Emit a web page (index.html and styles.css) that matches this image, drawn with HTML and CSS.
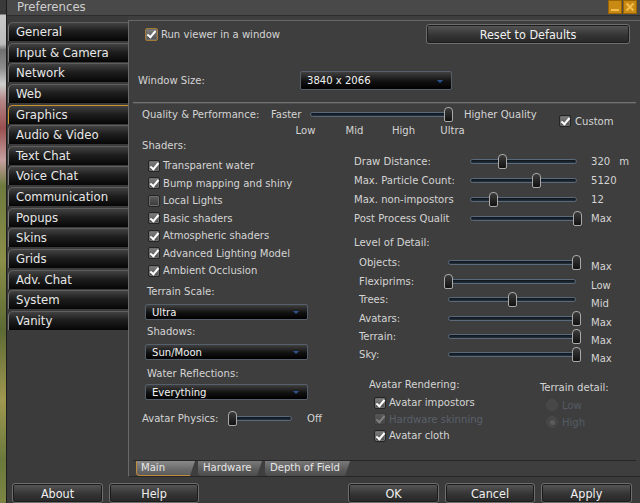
FILE: index.html
```html
<!DOCTYPE html>
<html lang="en">
<head>
  <meta charset="UTF-8">
  <title>Preferences</title>
  <link rel="stylesheet" href="styles.css">
</head>
<body>
  <div class="world"></div>

  <div class="floater">
    <!-- title bar -->
    <div class="titlebar">
      <span class="title">Preferences</span>
      <div class="title-btns">
        <span class="tbtn"><svg width="12" height="12" viewBox="0 0 12 12"><rect x="2" y="8" width="8" height="2" fill="#f4bd4d"/></svg></span>
        <span class="tbtn"><svg width="12" height="12" viewBox="0 0 12 12"><path d="M2.5 2.5 L9.5 9.5 M9.5 2.5 L2.5 9.5" stroke="#f4bd4d" stroke-width="2"/></svg></span>
      </div>
    </div>

    <div class="main">
      <!-- category tabs -->
      <div class="tabs">
        <div class="tab">General</div>
        <div class="tab">Input &amp; Camera</div>
        <div class="tab">Network</div>
        <div class="tab">Web</div>
        <div class="tab active">Graphics</div>
        <div class="tab">Audio &amp; Video</div>
        <div class="tab">Text Chat</div>
        <div class="tab">Voice Chat</div>
        <div class="tab">Communication</div>
        <div class="tab">Popups</div>
        <div class="tab">Skins</div>
        <div class="tab">Grids</div>
        <div class="tab">Adv. Chat</div>
        <div class="tab">System</div>
        <div class="tab">Vanity</div>
      </div>

      <!-- graphics panel -->
      <div class="panel">
        <div class="row-top">
          <label class="check focus"><span class="box on"></span>Run viewer in a window</label>
          <button class="btn reset">Reset to Defaults</button>
        </div>

        <div class="row-winsize">
          <span class="winsize-label">Window Size:</span>
          <div class="combo combo-wide">3840 x 2066<span class="arrow"></span></div>
        </div>

        <div class="sep"></div>

        <div class="row-quality">
          <span class="q-label">Quality &amp; Performance:</span>
          <span class="q-faster">Faster</span>
          <div class="slider s-quality" style="--v:1"><span class="track"></span><span class="knob"></span></div>
          <span class="q-higher">Higher Quality</span>
          <label class="check custom"><span class="box on"></span>Custom</label>
        </div>

        <div class="ticks">
          <span>Low</span><span>Mid</span><span>High</span><span>Ultra</span>
        </div>

        <div class="cols">
          <div class="col-left">
            <div class="sec-label">Shaders:</div>
            <div class="checklist">
              <label class="check"><span class="box on"></span>Transparent water</label>
              <label class="check"><span class="box on"></span>Bump mapping and shiny</label>
              <label class="check"><span class="box"></span>Local Lights</label>
              <label class="check"><span class="box on"></span>Basic shaders</label>
              <label class="check"><span class="box on"></span>Atmospheric shaders</label>
              <label class="check"><span class="box on"></span>Advanced Lighting Model</label>
              <label class="check"><span class="box on"></span>Ambient Occlusion</label>
            </div>

            <div class="combo-label terrain">Terrain Scale:</div>
            <div class="combo combo-left">Ultra<span class="arrow"></span></div>
            <div class="combo-label shadows">Shadows:</div>
            <div class="combo combo-left">Sun/Moon<span class="arrow"></span></div>
            <div class="combo-label water">Water Reflections:</div>
            <div class="combo combo-left water-combo">Everything<span class="arrow"></span></div>

            <div class="phys-row">
              <span class="phys-label">Avatar Physics:</span>
              <div class="slider s-phys" style="--v:0"><span class="track"></span><span class="knob"></span></div>
              <span class="phys-value">Off</span>
            </div>
          </div>

          <div class="col-right">
            <div class="sliders">
              <div class="srow">
                <span class="s-label">Draw Distance:</span>
                <div class="slider s-mid" style="--v:.3"><span class="track"></span><span class="knob"></span></div>
                <span class="s-value">320<span class="unit">m</span></span>
              </div>
              <div class="srow">
                <span class="s-label">Max. Particle Count:</span>
                <div class="slider s-mid" style="--v:.625"><span class="track"></span><span class="knob"></span></div>
                <span class="s-value">5120</span>
              </div>
              <div class="srow">
                <span class="s-label">Max. non-impostors</span>
                <div class="slider s-mid" style="--v:.215"><span class="track"></span><span class="knob"></span></div>
                <span class="s-value">12</span>
              </div>
              <div class="srow">
                <span class="s-label">Post Process Qualit</span>
                <div class="slider s-mid" style="--v:1"><span class="track"></span><span class="knob"></span></div>
                <span class="s-value">Max</span>
              </div>
            </div>

            <div class="sec-label lod-title">Level of Detail:</div>
            <div class="lod">
              <div class="lrow">
                <span class="l-label">Objects:</span>
                <div class="slider s-lod" style="--v:1"><span class="track"></span><span class="knob"></span></div>
                <span class="l-value">Max</span>
              </div>
              <div class="lrow">
                <span class="l-label">Flexiprims:</span>
                <div class="slider s-lod" style="--v:0"><span class="track"></span><span class="knob"></span></div>
                <span class="l-value">Low</span>
              </div>
              <div class="lrow">
                <span class="l-label">Trees:</span>
                <div class="slider s-lod" style="--v:.5"><span class="track"></span><span class="knob"></span></div>
                <span class="l-value">Mid</span>
              </div>
              <div class="lrow">
                <span class="l-label">Avatars:</span>
                <div class="slider s-lod" style="--v:1"><span class="track"></span><span class="knob"></span></div>
                <span class="l-value">Max</span>
              </div>
              <div class="lrow">
                <span class="l-label">Terrain:</span>
                <div class="slider s-lod" style="--v:1"><span class="track"></span><span class="knob"></span></div>
                <span class="l-value">Max</span>
              </div>
              <div class="lrow">
                <span class="l-label">Sky:</span>
                <div class="slider s-lod" style="--v:1"><span class="track"></span><span class="knob"></span></div>
                <span class="l-value">Max</span>
              </div>
            </div>

            <div class="render-area">
              <div class="avatar-rendering">
                <div class="sec-label">Avatar Rendering:</div>
                <div class="av-list">
                  <label class="check"><span class="box on"></span>Avatar impostors</label>
                  <label class="check disabled"><span class="box on"></span>Hardware skinning</label>
                  <label class="check"><span class="box on"></span>Avatar cloth</label>
                </div>
              </div>
              <div class="terrain-detail">
                <div class="sec-label">Terrain detail:</div>
                <div class="radios">
                  <label class="radio disabled"><span class="dot"></span>Low</label>
                  <label class="radio disabled"><span class="dot sel"></span>High</label>
                </div>
              </div>
            </div>
          </div>
        </div>

        <div class="subtabs">
          <span class="subtab active">Main</span>
          <span class="subtab">Hardware</span>
          <span class="subtab">Depth of Field</span>
        </div>
      </div>
    </div>

    <!-- footer buttons -->
    <div class="footer">
      <div class="footer-group">
        <button class="btn fbtn">About</button>
        <button class="btn fbtn narrow">Help</button>
      </div>
      <div class="footer-group">
        <button class="btn fbtn">OK</button>
        <button class="btn fbtn narrow">Cancel</button>
        <button class="btn fbtn">Apply</button>
      </div>
    </div>
  </div>
</body>
</html>
```

FILE: styles.css
```css
* {
  box-sizing: border-box;
  margin: 0;
  padding: 0;
}
body {
  width: 640px;
  height: 503px;
  overflow: hidden;
  display: flex;
  font-family: "DejaVu Sans Condensed", "Liberation Sans", sans-serif;
  font-size: 11.2px;
  color: #d4d4d4;
  background: #3c3c3c;
}

/* bit of the 3D world showing at the left edge */
.world {
  width: 7px;
  border-right: 1px solid #1c1c1c;
  background: linear-gradient(to bottom,
    #3a3a3a 0, #3a3a3a 14px, #c9c9c9 15px, #bdbdbd 44px, #6f6f6f 50px,
    #8d8d8d 68px, #cfcfcf 84px, #b48888 100px, #9a4f4f 128px, #c6a0a0 160px,
    #6e7a3e 186px, #8b8f48 260px, #5d6a34 330px, #a09850 400px,
    #6a7a3c 460px, #7d8544 503px);
}

.floater {
  flex: 1;
  display: flex;
  flex-direction: column;
  background: #3c3c3c;
}

/* title bar */
.titlebar {
  height: 16px;
  background: #494949;
  border-bottom: 1px solid #2d2d2d;
  display: flex;
  justify-content: space-between;
  padding: 0 3px 0 10px;
}
.title {
  font-size: 13px;
  line-height: 14px;
  color: #cfcfcf;
}
.title-btns {
  display: flex;
  gap: 1px;
}
.tbtn {
  width: 14px;
  height: 14px;
  background: #c88a12;
  border: 1px solid #9a6400;
  display: flex;
  align-items: center;
  justify-content: center;
}

.main {
  flex: 1;
  display: flex;
  background: #3e3e3e;
}

/* left category tabs */
.tabs {
  width: 121px;
  padding: 6px 0 0 1px;
  background: #3b3b3b;
}
.tab {
  height: 19px;
  margin-bottom: 1.64px;
  padding-left: 7px;
  border-top: 1px solid #5e5e5e;
  border-left: 1px solid #7a7a7a;
  border-radius: 5px 0 0 0;
  background: linear-gradient(#424242, #1e1e1e 45%, #060606);
  color: #e8e8e8;
  font-size: 13px;
  line-height: 18px;
  white-space: nowrap;
}
.tab.active {
  border-color: #c8922e;
}

/* main panel */
.panel {
  flex: 1;
  margin-top: 4px;
  border-top: 1px solid #676767;
  border-left: 1px solid #6a6a6a;
  border-bottom: 1px solid #262626;
  display: flex;
  flex-direction: column;
  background: #3e3e3e;
}

.row-top {
  margin-top: 3px;
  height: 20px;
  display: flex;
  align-items: center;
  justify-content: space-between;
  padding: 0 10px 0 16px;
}

/* checkboxes */
.check {
  display: flex;
  align-items: center;
  gap: 3px;
  white-space: nowrap;
}
.box {
  position: relative;
  width: 12px;
  height: 12px;
  border: 1px solid #242424;
  border-radius: 2px;
  background: linear-gradient(#5c5c5c, #3a3a3a);
  box-shadow: inset 0 0 0 1px #6e6e6e;
}
.box.on {
  background: linear-gradient(#808080, #4e4e4e);
}
.box.on::after {
  content: "";
  position: absolute;
  left: 3px;
  top: 0px;
  width: 3px;
  height: 7px;
  border: solid #ffffff;
  border-width: 0 2px 2px 0;
  transform: rotate(40deg);
}
.check.focus .box {
  border-color: #a47a34;
  width: 13px;
  height: 13px;
}
.check.disabled {
  color: #59606a;
}
.check.disabled .box {
  background: linear-gradient(#575757, #454545);
  box-shadow: none;
  border-color: #3a3a3a;
}
.check.disabled .box.on::after {
  border-color: #808080;
}

/* buttons */
.btn {
  font-family: inherit;
  font-size: 12.5px;
  color: #f0f0f0;
  height: 20px;
  border: 1px solid #6e6e6e;
  border-radius: 3px;
  background: linear-gradient(#585858, #353535 55%, #262626);
  box-shadow: inset 0 0 0 1px #1c1c1c;
}
.reset {
  width: 204px;
}

/* combo boxes */
.combo {
  position: relative;
  display: flex;
  align-items: center;
  padding-left: 6px;
  color: #f2f2f2;
  border: 1px solid #55606c;
  border-radius: 2px;
  background: linear-gradient(#404040, #111111 55%, #000000);
}
.arrow {
  position: absolute;
  right: 8px;
  top: 50%;
  margin-top: -1px;
  border-left: 3.5px solid transparent;
  border-right: 3.5px solid transparent;
  border-top: 3px solid #2c5594;
}

.row-winsize {
  margin-top: 27px;
  height: 19px;
  display: flex;
  align-items: center;
  padding-left: 9px;
}
.winsize-label {
  width: 162px;
}
.combo-wide {
  width: 152px;
  height: 19px;
}

.sep {
  margin: 12px 4px 0 4px;
  height: 2px;
  border-top: 1px solid #727272;
  border-bottom: 1px solid #4e4e4e;
}

/* sliders */
.slider {
  position: relative;
  height: 15px;
  flex-shrink: 0;
}
.track {
  position: absolute;
  left: 4.5px;
  right: 4.5px;
  top: 5px;
  height: 5px;
  border: 1px solid #5a6a7a;
  border-radius: 3px;
  background: linear-gradient(#0c141c, #26303a);
}
.knob {
  position: absolute;
  top: 0;
  left: calc((100% - 9px) * var(--v));
  width: 9px;
  height: 15px;
  border: 1px solid #a9a9a9;
  border-radius: 4px 4px 2px 2px;
  background: linear-gradient(#3c3c3c, #121212);
}

.row-quality {
  margin-top: 2px;
  height: 16px;
  display: flex;
  align-items: center;
  padding-left: 13px;
  white-space: nowrap;
}
.q-label {
  width: 129px;
}
.q-faster {
  width: 34.5px;
}
.s-quality {
  width: 147px;
}
.q-higher {
  margin-left: 11.5px;
  width: 95px;
}
.check.custom {
  margin-top: 14px;
  gap: 4px;
}

.ticks {
  margin-top: 2px;
  height: 14px;
  line-height: 14px;
  display: flex;
  padding-left: 152px;
}
.ticks span {
  width: 49px;
  text-align: center;
}

/* two columns */
.cols {
  display: flex;
}
.col-left {
  width: 225px;
  padding-left: 13px;
}
.col-right {
  flex: 1;
}
.sec-label {
  line-height: 14px;
  height: 14px;
  white-space: nowrap;
}
.col-left > .sec-label {
  margin-top: 1px;
}
.checklist {
  margin-top: 4px;
  padding-left: 6px;
}
.checklist .check {
  height: 17.5px;
}
.combo-label {
  padding-left: 5px;
  line-height: 14px;
  height: 14px;
}
.combo-label.terrain {
  margin-top: 5.5px;
}
.combo-label.shadows {
  margin-top: 5px;
}
.combo-label.water {
  margin-top: 7px;
}
.combo-left {
  margin: 5px 0 0 3px;
  width: 163px;
  height: 16px;
}
.combo-left.water-combo {
  margin-top: 3px;
}
.phys-row {
  margin-top: 10px;
  height: 16px;
  display: flex;
  align-items: center;
}
.phys-label {
  width: 85.5px;
  white-space: nowrap;
}
.s-phys {
  width: 69px;
}
.phys-value {
  margin-left: 10.5px;
}

/* right column sliders */
.sliders {
  margin-top: 14.6px;
}
.srow {
  height: 18.7px;
  display: flex;
  align-items: center;
  white-space: nowrap;
}
.s-label {
  width: 111.5px;
  overflow: hidden;
}
.s-mid {
  width: 116px;
}
.s-value {
  margin-left: 9.5px;
}
.unit {
  margin-left: 9px;
}

.lod-title {
  margin-top: 8.6px;
}
.lod {
  margin-top: 3.8px;
  padding-left: 5px;
}
.lrow {
  height: 18.4px;
  display: flex;
  align-items: center;
  white-space: nowrap;
}
.l-label {
  width: 84.5px;
}
.s-lod {
  width: 137px;
}
.l-value {
  margin-left: 10.5px;
  margin-top: 8px;
}

.render-area {
  display: flex;
}
.avatar-rendering {
  width: 186px;
  padding-left: 15px;
  padding-top: 13.8px;
}
.av-list {
  margin-top: 2.8px;
  padding-left: 5px;
}
.av-list .check {
  height: 16.5px;
}
.terrain-detail {
  padding-top: 16.8px;
}
.radios {
  margin-top: 2px;
  padding-left: 6px;
}
.radio {
  height: 17px;
  display: flex;
  align-items: center;
  gap: 4px;
}
.radio.disabled {
  color: #555c64;
}
.dot {
  width: 12px;
  height: 12px;
  border-radius: 50%;
  border: 1px solid #4a4a4a;
  background: #474747;
  display: flex;
  align-items: center;
  justify-content: center;
}
.dot.sel::after {
  content: "";
  width: 5px;
  height: 5px;
  border-radius: 50%;
  background: #5c5c5c;
}

/* inner tabs at the bottom of the panel */
.subtabs {
  margin: auto 4px 0 4px;
  border-top: 1px solid #262626;
  height: 16px;
  padding-left: 3px;
  display: flex;
  gap: 3px;
}
.subtab {
  height: 15px;
  line-height: 14px;
  padding-left: 5px;
  color: #e6e6e6;
  background: linear-gradient(#7a7a7a, #5a5a5a 60%, #4c4c4c);
  clip-path: polygon(0 0, 100% 0, calc(100% - 5px) 100%, 0 100%);
  border-radius: 0 0 0 4px;
  white-space: nowrap;
}
.subtab:nth-child(1) {
  width: 59px;
}
.subtab:nth-child(2) {
  width: 64px;
}
.subtab:nth-child(3) {
  width: 85px;
}
.subtab.active {
  background: linear-gradient(#8a8a8a, #6a6a6a 60%, #5c5c5c);
  border-left: 1px solid #c08a3a;
  border-bottom: 1px solid #c08a3a;
  padding-left: 4px;
}

/* footer */
.footer {
  height: 26px;
  padding: 6px 8px 0 5px;
  display: flex;
  justify-content: space-between;
  background: #3b3b3b;
}
.footer-group {
  display: flex;
  gap: 6px;
}
.fbtn {
  width: 91px;
}
.fbtn.narrow {
  width: 90px;
}
```
